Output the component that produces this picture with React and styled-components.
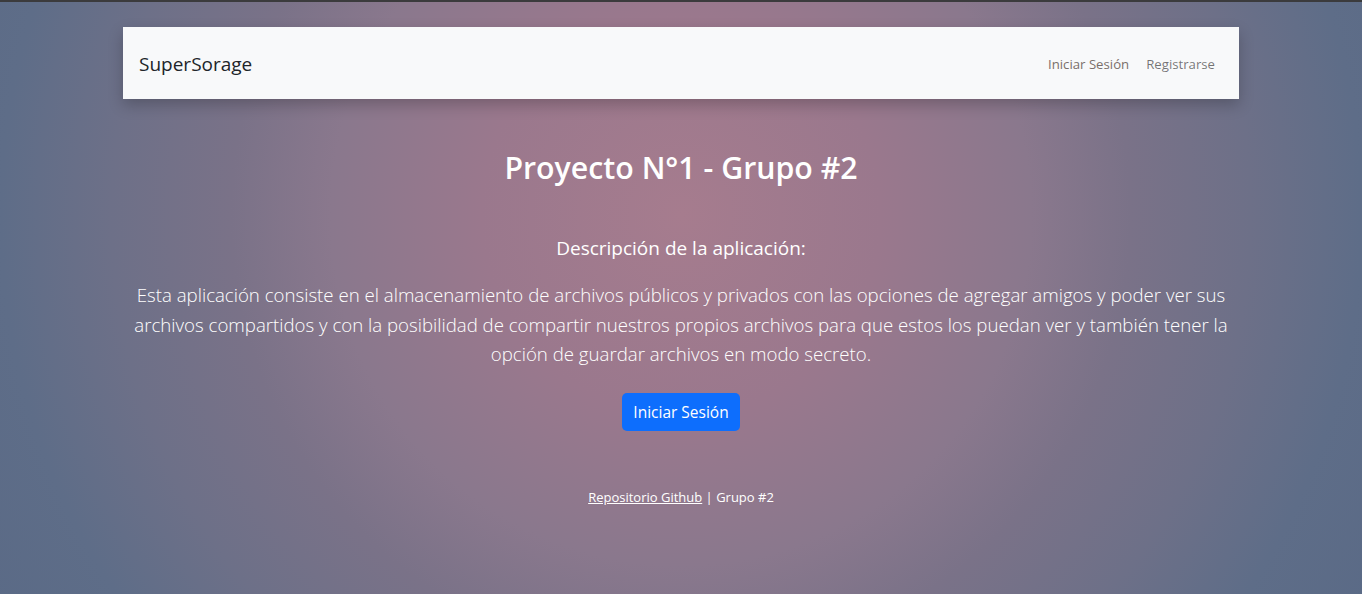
import React from "react";
import styled, { createGlobalStyle } from "styled-components";

const GlobalStyle = createGlobalStyle`
  html, body {
    margin: 0;
    padding: 0;
  }
  body {
    font-family: "Open Sans", "Noto Sans", sans-serif;
    color: #fff;
  }
`;

const Page = styled.div`
  min-height: 594px;
  box-sizing: border-box;
  border-top: 2px solid #3b3b3d;
  background: radial-gradient(
    circle at 50% 36%,
    #a67c8e 0px,
    #9a788d 200px,
    #8a788d 350px,
    #7a7288 450px,
    #6d7088 570px,
    #5e6d88 680px,
    #5a6a86 800px
  );
  display: flex;
  flex-direction: column;
  align-items: center;
  padding-top: 25px;
`;

const Navbar = styled.nav`
  width: 1116px;
  height: 72px;
  box-sizing: border-box;
  background: #f8f9fa;
  box-shadow: 0 6px 14px rgba(0, 0, 0, 0.22);
  display: flex;
  align-items: center;
  justify-content: space-between;
  padding: 2px 24px 0 16px;
`;

const Brand = styled.a`
  font-size: 19px;
  color: #212529;
  text-decoration: none;
`;

const NavLinks = styled.div`
  display: flex;
  gap: 17px;
`;

const NavLink = styled.a`
  font-size: 13.2px;
  color: ${(p) => (p.$active ? "#7a6f6a" : "rgba(0, 0, 0, 0.55)")};
  text-decoration: none;
`;

const Main = styled.main`
  width: 1116px;
  display: flex;
  flex-direction: column;
  align-items: center;
  text-align: center;
`;

const Title = styled.h2`
  margin: 50px 0 0;
  font-size: 30.3px;
  font-weight: 600;
  line-height: 38px;
`;

const Subtitle = styled.h5`
  margin: 49px 0 0;
  font-size: 19px;
  font-weight: 500;
  line-height: 24px;
`;

const Lead = styled.p`
  margin: 20px 0 0;
  font-size: 18.65px;
  font-weight: 300;
  line-height: 29.5px;
`;

const PrimaryButton = styled.button`
  margin-top: 24px;
  width: 118px;
  height: 38px;
  border: none;
  border-radius: 5px;
  background: #0d6efd;
  color: #fff;
  font-family: inherit;
  font-size: 15.5px;
  cursor: pointer;
`;

const Footer = styled.footer`
  margin-top: 56px;
  font-size: 13px;
  line-height: 20px;
`;

const FooterLink = styled.a`
  color: #fff;
  text-decoration: underline;
`;

export default function App() {
  return (
    <>
      <GlobalStyle />
      <Page>
        <Navbar>
          <Brand href="#">SuperSorage</Brand>
          <NavLinks>
            <NavLink href="#" $active>Iniciar Sesión</NavLink>
            <NavLink href="#">Registrarse</NavLink>
          </NavLinks>
        </Navbar>
        <Main>
          <Title>Proyecto N°1 - Grupo #2</Title>
          <Subtitle>Descripción de la aplicación:</Subtitle>
          <Lead>
            Esta aplicación consiste en el almacenamiento de archivos públicos y
            privados con las opciones de agregar amigos y poder ver sus archivos
            compartidos y con la posibilidad de compartir nuestros propios
            archivos para que estos los puedan ver y también tener la opción de
            guardar archivos en modo secreto.
          </Lead>
          <PrimaryButton>Iniciar Sesión</PrimaryButton>
          <Footer>
            <FooterLink href="#">Repositorio Github</FooterLink> | Grupo #2
          </Footer>
        </Main>
      </Page>
    </>
  );
}
